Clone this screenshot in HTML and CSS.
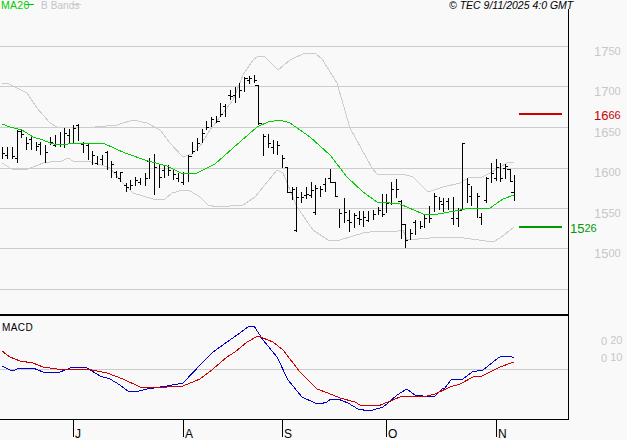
FILE: index.html
```html
<!DOCTYPE html>
<html lang="en">
<head>
<meta charset="utf-8">
<title>TEC chart</title>
<link rel="stylesheet" href="styles.css">
</head>
<body>
<svg class="chart" width="627" height="440" viewBox="0 0 627 440" xmlns="http://www.w3.org/2000/svg">
  <path class="grid" d="M0 46.5H568M0 86.5H568M0 127.5H568M0 168.5H568M0 208.5H568M0 248.5H568M0 289.5H568M0 369.5H568"/>

  <polyline class="band" points="2,84 7,83 17,88 27,93 37,108 43,115 50,123 57,127 73,128 95,127 117,125 133,120 147,123 160,130 170,143 183,157 192,154 200,146 210,130 220,117 233,100 243,75 253,60 258,56 265,57 278,70 290,60 305,53 315,53 322,59 337,83 350,128 372,168 377,174 390,174 403,174 413,177 428,192 443,187 460,183 470,177 480,178 490,173 507,163 514,162"/>
  <polyline class="band" points="2,163 12,169 28,169 43,163 50,162 62,161 68,158 73,161 88,161 110,168 122,182 133,193 153,199 165,199 172,193 183,190 190,191 200,197 208,205 217,207 243,205 255,197 277,170 283,173 297,207 313,230 328,240 340,240 363,233 377,231 393,232 403,230 407,240 430,238 457,237 493,242 500,238 514,227"/>

  <path class="bars" d="M2.5 147V159M3 153h2M7.5 147V159M5 155h2M12.5 147V159M13 156h2M17.5 130V163M15 158h2M21.5 130V138M18 131h3M22 134h2
  M26.5 137V150M27 143h2M31.5 137V150M29 139h2M36.5 142V151M37 146h2M40.5 142V155M38 144h2M45.5 145V163M46 152h2M50.5 137V145M51 142h2M55.5 135V147M53 145h2M60.5 132V147M61 144h2M64.5 128V148M65 133h2M69.5 129V143M67 135h2M73.5 125V143M74 128h2M78.5 124V141M76 125h2
  M83.5 142V153M81 144h2M84 143h2M88.5 144V160M86 145h2M92.5 151V165M93 155h2M97.5 156V165M95 163h2M102.5 155V165M100 159h2M107.5 151V170M105 152h2M111.5 161V178M112 164h2M116.5 171V178M114 172h2M120.5 172V182M118 178h2M121 172h2
  M126.5 183V192M124 185h2M127 187h2M130.5 180V190M131 185h2M135.5 177V186M136 180h2M140.5 178V185M138 182h2M145.5 173V186M146 178h2M149.5 158V179M147 161h2M154.5 154V195M155 167h2M159.5 165V188M160 177h2M164.5 165V178M162 170h2M168.5 165V176M169 170h2M173.5 170V180M174 174h2M178.5 173V182M176 178h2M183.5 172V185M181 182h2M188.5 155V182M189 156h3M192.5 142V154M193 151h2M197.5 138V151M198 143h2M202.5 129V143M203 133h2
  M206.5 121V130M207 127h2M211.5 117V127M212 119h2M216.5 116V123M217 121h3M220.5 103V117M221 114h2M225.5 104V117M223 106h2M230.5 90V100M228 95h2M231 96h2M235.5 87V103M233 95h2M239.5 83V98M240 90h2M244.5 77V92M245 78h3M249.5 76V84M247 80h2M250 78h2M254.5 75V83M255 80h2
  M258.5 85V125M255 85h3M259 123h3M263.5 134V156M264 136h2M268.5 134V148M269 143h2M273.5 140V154M271 147h2M277.5 141V155M278 145h2M282.5 155V168M283 158h2M287.5 167V193M285 167h2M288 192h4M292.5 187V200M293 189h2M296.5 187V232M297 197h2M294 230h2M301.5 192V203M302 197h2M306.5 187V199M304 195h2M307 194h2M311.5 182V198M309 195h2M312 190h2M315.5 185V215M313 212h2M316 188h2M320.5 186V197M321 189h2M325.5 178V192M323 184h2M330.5 169V183M328 178h2M335.5 182V197M331 182h4M336 196h2M339.5 209V228M340 213h2M344.5 198V223M345 212h2M349.5 210V232M347 220h2M350 222h2M354.5 213V228M355 215h2M359.5 211V225M357 218h2M360 219h2M363.5 211V227M364 217h2M368.5 211V222M366 220h2M373.5 210V220M374 214h2M378.5 207V215M379 210h2M382.5 194V217M383 214h2M386.5 194V213M387 203h2M391.5 182V205M392 189h2M396.5 179V198M397 189h2M401.5 200V239M398 201h3M402 224h3M405.5 224V248M406 240h2
  M410.5 229V240M411 233h2M415.5 220V235M413 222h2M420.5 221V229M421 226h2M424.5 215V228M425 218h2M429.5 206V223M430 218h2M434.5 193V212M435 196h2M439.5 197V210M440 201h2M443.5 198V212M441 204h2M448.5 198V210M446 201h2M453.5 197V225M451 218h2M458.5 208V227M456 218h2M459 210h2M462.5 143V210M463 143h2M460 210h2M467.5 178V203M468 184h2M471.5 186V206M469 196h2M477.5 193V218M478 196h2M481.5 213V225M479 217h2M486.5 177V203M484 200h2M487 178h2M491.5 163V183M492 173h2M496.5 159V181M494 178h2M497 167h2M500.5 163V182M501 178h2M505.5 164V179M503 168h2M506 166h2M510.5 169V182M507 169h3M511 181h2M514.5 175V201M511 192h3"/>

  <polyline class="ma" points="2,124 10,127 22,130 33,137 43,140 50,143 58,145 68,144 83,143 105,144 125,153 148,161 167,166 183,174 197,173 215,164 233,148 257,127 268,122 280,120 290,123 310,137 330,155 347,177 363,192 377,202 390,203 400,204 423,214 433,215 460,210 470,208 490,208 503,199 514,195"/>

  <polyline class="macd-blue" points="2,366 12,371 20,368 33,368 43,372 60,372 73,367 87,368 100,376 110,379 120,385 128,391 135,392 147,389 167,386 183,383 203,362 213,352 227,342 237,335 248,327 254,326 263,340 277,357 288,380 302,397 315,403 320,404 327,402 331,399 338,399 348,403 358,409 369,411 373,410 383,407 387,404 397,395 407,389 415,395 423,396 435,396 443,388 445,388 451,380 457,379 463,379 472,372 483,370 498,358 500,357 505,356 510,356 514,358"/>

  <polyline class="macd-red" points="2,351 10,357 20,361 33,363 43,367 57,369 87,369 107,373 123,379 140,387 167,387 183,386 200,379 213,369 227,357 235,352 247,342 258,336 273,342 283,350 300,372 317,389 328,393 340,398 355,402 360,405 378,406 400,397 427,396 435,394 450,387 460,384 473,377 482,376 500,367 514,362"/>

  <text class="lbl lbl-macd" x="2" y="331">MACD</text>

  <path class="frame-thick" d="M0 315H569"/>
  <path class="frame" d="M568.5 9V420M0 419.5H569M73.5 419V437M183.5 419V437M282.5 419V437M386.5 419V437M496.5 419V437"/>

  <text class="lbl lbl-legend-ma" x="1" y="9">MA20</text>
  <path class="ma-key" d="M25 4.5H34"/>
  <text class="lbl lbl-legend-bb" x="41" y="9">B Bands</text>
  <path class="bb-key" d="M72 4.5H81"/>
  <text class="lbl lbl-stamp" x="449" y="9">© TEC 9/11/2025 4:0 GMT</text>

  <text class="lbl lbl-tick" x="75" y="438">J</text>
  <text class="lbl lbl-tick" x="185" y="438">A</text>
  <text class="lbl lbl-tick" x="284" y="438">S</text>
  <text class="lbl lbl-tick" x="388" y="438">O</text>
  <text class="lbl lbl-tick" x="498" y="438">N</text>

  <text class="axis" x="594" y="56">17<tspan class="small" dy="-1">50</tspan></text>
  <text class="axis" x="594" y="96">17<tspan class="small" dy="-1">00</tspan></text>
  <text class="axis" x="594" y="137">16<tspan class="small" dy="-1">50</tspan></text>
  <text class="axis" x="594" y="177">16<tspan class="small" dy="-1">00</tspan></text>
  <text class="axis" x="594" y="218">15<tspan class="small" dy="-1">50</tspan></text>
  <text class="axis" x="594" y="258">15<tspan class="small" dy="-1">00</tspan></text>

  <path class="line-red" d="M519 114H562"/>
  <text class="axis axis-red" x="594" y="120">16<tspan class="small" dy="-1">66</tspan></text>
  <path class="line-green" d="M519 227H562"/>
  <text class="axis axis-green" x="570" y="233">15<tspan class="small" dy="-1">26</tspan></text>

  <text class="axis axis-macd" x="601" y="345">0 <tspan class="small" dy="-1">20</tspan></text>
  <text class="axis axis-macd" x="601" y="362">0 <tspan class="small" dy="-1">10</tspan></text>
</svg>
</body>
</html>
```

FILE: styles.css
```css
html, body {
  margin: 0;
  padding: 0;
  background: #f9f9f9;
}

.chart {
  display: block;
  background: #f9f9f9;
}

.grid, .band, .bars, .ma, .macd-blue, .macd-red, .frame, .frame-thick,
.ma-key, .bb-key, .line-red, .line-green {
  fill: none;
  shape-rendering: crispEdges;
}

.grid { stroke: #cccccc; stroke-width: 1; }
.band { stroke: #cccccc; stroke-width: 1; }
.bars { stroke: #000000; stroke-width: 1; }
.ma { stroke: #00cc00; stroke-width: 1; }
.macd-blue { stroke: #0000cc; stroke-width: 1; }
.macd-red { stroke: #cc0000; stroke-width: 1; }
.frame { stroke: #000000; stroke-width: 1; }
.frame-thick { stroke: #000000; stroke-width: 2; }
.ma-key { stroke: #00cc00; stroke-width: 1; }
.bb-key { stroke: #cccccc; stroke-width: 1; }
.line-red { stroke: #cc0000; stroke-width: 2; }
.line-green { stroke: #009900; stroke-width: 2; }

.lbl {
  font-family: "Liberation Sans", Arial, sans-serif;
  font-size: 10px;
}
.lbl-legend-ma { fill: #00cc00; font-size: 10.5px; letter-spacing: 0.3px; }
.lbl-legend-bb { fill: #c4c4c4; font-size: 10px; letter-spacing: 0.1px; }
.lbl-stamp { fill: #000000; font-style: italic; font-size: 10.5px; }
.lbl-macd { fill: #000000; font-size: 10px; letter-spacing: 0.4px; }
.lbl-tick { fill: #000000; font-size: 12px; }

.axis {
  font-family: "Liberation Sans", Arial, sans-serif;
  font-size: 13px;
  fill: #c8c8c8;
}
.axis .small { font-size: 11px; }
.axis-red { fill: #cc0000; }
.axis-green { fill: #009900; }
.axis-macd { font-size: 11px; }
```
